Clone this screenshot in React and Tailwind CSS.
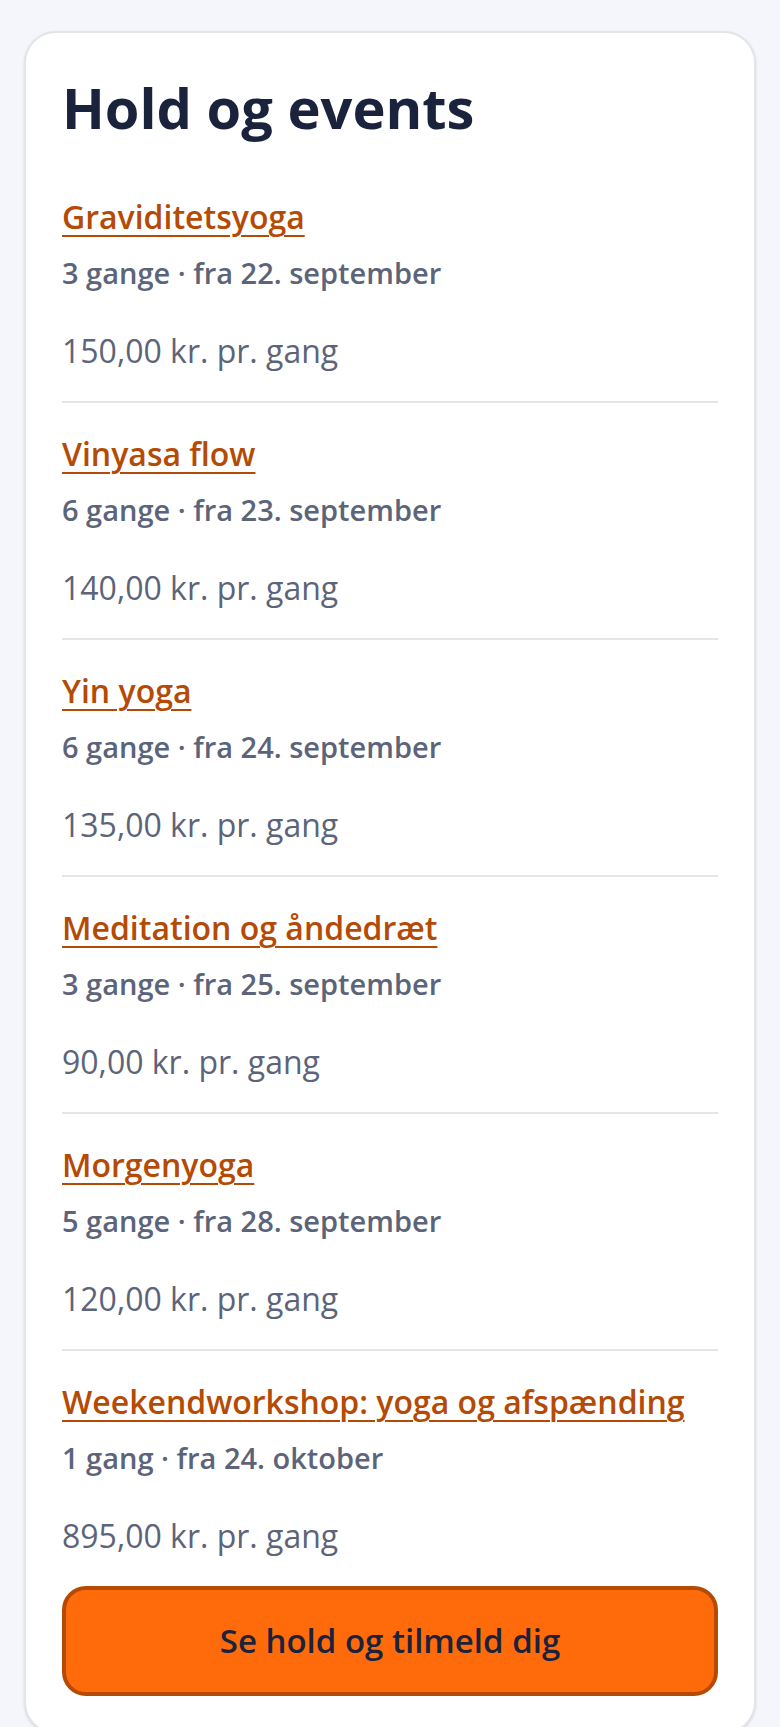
const events = [
  { id: 'graviditetsyoga', title: 'Graviditetsyoga', dates: '3 gange · fra 22. september', price: '150,00 kr. pr. gang' },
  { id: 'vinyasa-flow', title: 'Vinyasa flow', dates: '6 gange · fra 23. september', price: '140,00 kr. pr. gang' },
  { id: 'yin-yoga', title: 'Yin yoga', dates: '6 gange · fra 24. september', price: '135,00 kr. pr. gang' },
  { id: 'meditation', title: 'Meditation og åndedræt', dates: '3 gange · fra 25. september', price: '90,00 kr. pr. gang' },
  { id: 'morgenyoga', title: 'Morgenyoga', dates: '5 gange · fra 28. september', price: '120,00 kr. pr. gang' },
  { id: 'weekendworkshop', title: 'Weekendworkshop: yoga og afspænding', dates: '1 gang · fra 24. oktober', price: '895,00 kr. pr. gang' },
];

const EventItem = ({ event }) => (
  <li className="border-b-2 border-[#e3e5e8] pt-7 pb-[25px] first:pt-0 last:border-b-0">
    <h2 className="text-[32px] leading-[46px] font-semibold">
      <a href={`#${event.id}`} className="text-[#b54a05] underline decoration-2 underline-offset-[6px]">
        {event.title}
      </a>
    </h2>
    <p className="mt-3 text-[29px] leading-[42px] font-semibold text-[#5c6479]">{event.dates}</p>
    <p className="mt-8 text-[32px] leading-[50px] text-[#5c6479]">{event.price}</p>
  </li>
);

export default function App() {
  return (
    <div className="h-screen overflow-hidden bg-[#f4f6fb] px-6 pt-[31px] font-['Open_Sans','Noto_Sans',sans-serif]">
      <section className="rounded-[32px] border-2 border-[#e3e5e8] bg-white p-9 shadow-sm">
        <h1 className="text-[56px] leading-[77px] font-bold text-[#1b223c]">Hold og events</h1>
        <ul className="mt-12">
          {events.map(event => (
            <EventItem key={event.id} event={event} />
          ))}
        </ul>
        <button
          type="button"
          className="block h-[110px] w-full cursor-pointer rounded-3xl border-4 border-[#b54a05] bg-[#ff6b0b] text-[33px] font-semibold text-[#1b223c] hover:bg-[#f56200]"
        >
          Se hold og tilmeld dig
        </button>
      </section>
    </div>
  );
}
